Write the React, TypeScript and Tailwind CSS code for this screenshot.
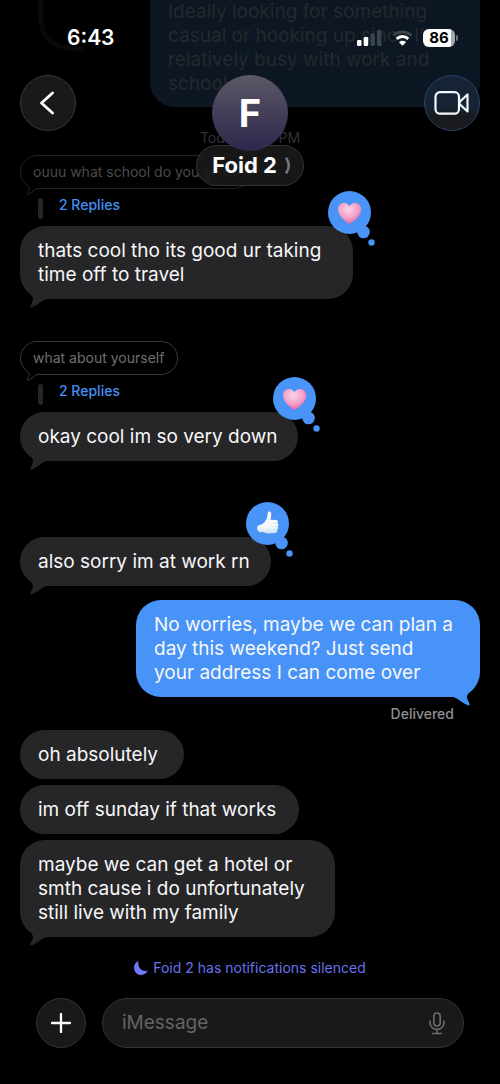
import clsx from "clsx";
import type { ReactNode } from "react";

type Reaction = "heart" | "thumb";

function Heart() {
  return (
    <>
      <defs>
        <radialGradient id="heart" cx="0.45" cy="0.3" r="0.8">
          <stop offset="0" stopColor="#fbd3e6" />
          <stop offset="0.5" stopColor="#f3a3cb" />
          <stop offset="1" stopColor="#ea4f93" />
        </radialGradient>
      </defs>
      <path
        d="M21.5 33C18 30.5 10 25.5 10 18.5C10 14.5 12.8 12 16 12C18.5 12 20.6 13.3 21.5 15.2C22.4 13.3 24.5 12 27 12C30.2 12 33.2 14.5 33.2 18.5C33.2 25.5 25 30.5 21.5 33Z"
        fill="url(#heart)"
      />
    </>
  );
}

function Thumb() {
  return (
    <>
      <defs>
        <linearGradient id="thumb" x1="0" y1="0" x2="0" y2="1">
          <stop offset="0" stopColor="#ffffff" />
          <stop offset="0.7" stopColor="#f4f8fc" />
          <stop offset="1" stopColor="#c9dff2" />
        </linearGradient>
      </defs>
      <path
        d="M22 10.2C22.3 9.3 24.2 9.2 24.9 10.5C25.7 12.5 25 15.3 24.3 17.8L30 18C32 18.1 32.5 20.2 31.4 21.2C32.8 21.9 32.7 24 31.5 24.6C32.5 25.4 32.2 27.3 31 27.8C31.8 29 30.9 30.8 29.3 31L22.5 31.4C19.5 31.5 17.5 29.6 16.3 30C13.8 31 11.8 29.5 11.3 27.3C10.8 25 11.5 23.6 13.8 23C17.5 22 20 19 21 15.5C21.5 13.8 21.5 11.8 22 10.2Z"
        fill="url(#thumb)"
      />
      <path d="M27 21.3H31M27 24.6H31.2M26.8 27.8H30.6" stroke="#cfe0f0" strokeWidth="0.7" strokeLinecap="round" />
    </>
  );
}

function ReactionBadge({ kind }: { kind: Reaction }) {
  return (
    <svg
      width="47"
      height="56"
      viewBox="0 0 47 56"
      className="absolute -top-[35px] -right-[22px]"
      role="img"
      aria-label={kind === "heart" ? "Loved" : "Liked"}
    >
      <circle cx="21.5" cy="21.5" r="21.5" fill="#4a94f8" />
      <circle cx="35.5" cy="41" r="6.3" fill="#4a94f8" />
      <circle cx="43.5" cy="51.5" r="3.2" fill="#4a94f8" />
      {kind === "heart" ? <Heart /> : <Thumb />}
    </svg>
  );
}

function Bubble({
  sent = false,
  tail = false,
  reaction,
  className,
  children,
}: {
  sent?: boolean;
  tail?: boolean;
  reaction?: Reaction;
  className?: string;
  children: ReactNode;
}) {
  return (
    <div
      className={clsx(
        "relative max-w-full rounded-[25px] pt-[13px] pb-3 pl-[18px]",
        sent ? "self-end bg-[#4893f8]" : "self-start bg-[#262628]",
        className,
      )}
    >
      <p className="text-[19px] leading-6 whitespace-pre-line text-[#f7f7f8]">{children}</p>
      {tail && (
        <svg
          width="28"
          height="20"
          viewBox="0 0 28 20"
          className={clsx(
            "absolute -bottom-[9px]",
            sent ? "right-0 -scale-x-100 text-[#4893f8]" : "left-0 text-[#262628]",
          )}
          aria-hidden="true"
        >
          <path d="M7 3.5C13 7.5 14.5 10.5 11.5 15.5C10 18 9.8 20 12 19.3C17 17.8 21 12.5 27 11V3Z" fill="currentColor" />
        </svg>
      )}
      {reaction && <ReactionBadge kind={reaction} />}
    </div>
  );
}

function Quote({ faded = false, children }: { faded?: boolean; children: ReactNode }) {
  return (
    <>
      <div
        className={clsx(
          "relative h-[34px] self-start rounded-full border pr-[13px] pl-3",
          faded ? "border-[#222222] text-[#4b4b4b]" : "border-[#38383a] text-[#707074]",
        )}
      >
        <p className="text-sm leading-8">{children}</p>
        <svg
          width="20"
          height="19"
          viewBox="0 0 20 19"
          className={clsx("absolute -bottom-2 -left-px", faded ? "text-[#2a2a2a]" : "text-[#38383a]")}
          aria-hidden="true"
        >
          <path
            d="M6.5 7.5C10 10.2 9.6 12 8 14.5C6.8 16.5 7 17.7 8.8 17C12 15.8 13.5 12.8 17.5 11.5"
            fill="black"
            stroke="currentColor"
          />
        </svg>
      </div>
      <div className="flex h-[37px] items-start gap-4 pl-[18px]">
        <span className="mt-[9px] h-[21px] w-[5px] rounded-full bg-[#262628]" />
        <a href="#replies" className="mt-1.5 text-sm leading-5 font-medium text-[#4490f5]">
          2 Replies
        </a>
      </div>
    </>
  );
}

function StatusBar() {
  return (
    <div className="flex h-[75px] items-center justify-between pr-[42px] pl-[67px]">
      <span className="text-[21px] leading-6 font-semibold text-white">6:43</span>
      <div className="flex items-center gap-2.5">
        <svg width="25" height="16" viewBox="0 0 25 16" aria-hidden="true">
          <rect x="0" y="10" width="4.5" height="6" rx="1.3" fill="white" />
          <rect x="6.7" y="7" width="4.5" height="9" rx="1.3" fill="white" />
          <rect x="13.4" y="3.5" width="4.5" height="12.5" rx="1.3" fill="#3a444f" />
          <rect x="20" y="0" width="4.5" height="16" rx="1.3" fill="#3a444f" />
        </svg>
        <svg width="21" height="16" viewBox="0 0 21 16" aria-hidden="true" fill="none">
          <path d="M1.5 5.5C6.6 0.7 14.4 0.7 19.5 5.5" stroke="#3a444f" strokeWidth="3" />
          <path d="M4.7 8.9C8 5.8 13 5.8 16.3 8.9" stroke="white" strokeWidth="3" />
          <path d="M10.5 15.7L7 12.2C9 10.4 12 10.4 14 12.2Z" fill="white" />
        </svg>
        <div className="flex items-center gap-px">
          <span className="h-[18px] w-8 rounded-md bg-linear-to-r from-white from-88% to-[#a5a9ae] to-88% text-center text-[15px] leading-[18px] font-bold text-black">
            86
          </span>
          <span className="h-1.5 w-0.5 rounded-r-full bg-[#6b737c]" />
        </div>
      </div>
    </div>
  );
}

function Header() {
  return (
    <header className="absolute inset-x-0 top-0 z-10">
      <StatusBar />
      <div className="flex items-start justify-between px-5">
        <button
          type="button"
          aria-label="Back"
          className="flex size-14 items-center justify-center rounded-full border border-[#3a3a3a] bg-[#191919]"
        >
          <svg width="16" height="24" viewBox="0 0 16 24" fill="none" stroke="white" strokeWidth="2.8" strokeLinecap="round" strokeLinejoin="round">
            <path d="M12.5 2L1.5 12L12.5 22" />
          </svg>
        </button>
        <div className="flex flex-col items-center">
          <div className="relative flex size-[76px] items-center justify-center rounded-full bg-linear-to-b from-[#5c5867] to-[#2f274b] text-[38px] font-bold text-white">
            F
          </div>
          <button
            type="button"
            className="-mt-1.5 flex h-[41px] items-center gap-2 rounded-full border border-[#333333] bg-[#191919]/90 pr-3 pl-[15px] text-[22px] font-bold text-white"
          >
            Foid 2
            <svg width="6" height="17" viewBox="0 0 6 17" fill="none" stroke="#77777a" strokeWidth="2.5" strokeLinecap="round" strokeLinejoin="round">
              <path d="M1.5 1.5Q6 8.5 1.5 15.5" />
            </svg>
          </button>
        </div>
        <button
          type="button"
          aria-label="Video call"
          className="flex size-14 items-center justify-center rounded-full border border-[#28456b] bg-linear-to-b from-[#152335] from-55% to-[#191b1e] to-75%"
        >
          <svg width="36" height="24" viewBox="0 0 36 24" fill="none" stroke="#f1f8ff" strokeWidth="2.2" strokeLinejoin="round">
            <rect x="1.5" y="1.2" width="23.5" height="21.5" rx="4.5" />
            <path d="M25.5 11L33.5 3.5V20.5L25.5 13Z" />
          </svg>
        </button>
      </div>
    </header>
  );
}

function Composer() {
  return (
    <form className="mt-[18px] flex gap-4 px-9 pb-9" onSubmit={(event) => event.preventDefault()}>
      <button
        type="button"
        aria-label="Add"
        className="flex size-[50px] shrink-0 items-center justify-center rounded-full border border-[#333333] bg-[#191919]"
      >
        <svg width="20" height="20" viewBox="0 0 20 20" stroke="white" strokeWidth="2.3" strokeLinecap="round">
          <path d="M10 1V19M1 10H19" />
        </svg>
      </button>
      <div className="flex h-[50px] min-w-0 flex-1 items-center rounded-full border border-[#333333] bg-[#191919] pr-[18px] pl-[19px]">
        <input
          type="text"
          aria-label="Message"
          placeholder="iMessage"
          className="min-w-0 flex-1 bg-transparent text-[19px] text-white outline-none placeholder:text-[#636366]"
        />
        <button type="button" aria-label="Dictate">
          <svg width="16" height="23" viewBox="0 0 16 23" fill="none" stroke="#6c6c6e" strokeWidth="1.6" strokeLinecap="round">
            <rect x="4.8" y="1" width="6.4" height="13" rx="3.2" />
            <path d="M1 9V10.5A7 7 0 0 0 15 10.5V9M8 17.5V21.5M3.5 21.5H12.5" />
          </svg>
        </button>
      </div>
    </form>
  );
}

export default function App() {
  return (
    <div className="relative flex min-h-screen flex-col overflow-hidden bg-black font-['Inter',sans-serif]">
      <Header />
      <main className="flex flex-1 flex-col px-5">
        {/* oldest message, scrolled under the header */}
        <div className="relative flex justify-end">
          <svg width="66" height="52" viewBox="0 0 66 52" fill="none" className="absolute top-0 left-0" aria-hidden="true">
            <path d="M20.5 0V16C20.5 38 32 49 62 49" stroke="#090909" strokeWidth="5" strokeLinecap="round" />
          </svg>
          <div className="w-[330px] rounded-b-[25px] bg-[#0c1723] pb-[11px] pl-[18px]">
            <p className="text-[19px] leading-6 whitespace-pre-line text-[#25282c]">
              {"Ideally looking for something\ncasual or hooking up since I'm\nrelatively busy with work and\nschool"}
            </p>
          </div>
        </div>
        <p className="pt-[22px] pb-2 text-center text-sm leading-[18px] text-[#333333]">Today 2:48 PM</p>

        <Quote faded>ouuu what school do you go to</Quote>
        <Bubble tail reaction="heart" className="w-[333px]">
          {"thats cool tho its good ur taking\ntime off to travel"}
        </Bubble>

        <div className="mt-[42px] flex flex-col">
          <Quote>what about yourself</Quote>
          <Bubble tail reaction="heart" className="w-[278px]">
            okay cool im so very down
          </Bubble>
        </div>

        <div className="mt-[76px] flex flex-col">
          <Bubble tail reaction="thumb" className="w-[251px]">
            also sorry im at work rn
          </Bubble>
        </div>

        <div className="mt-[14px] flex flex-col">
          <Bubble sent tail className="w-[344px]">
            {"No worries, maybe we can plan a\nday this weekend? Just send\nyour address I can come over"}
          </Bubble>
          <p className="mt-2 mr-[26px] self-end text-sm leading-[17px] font-medium text-[#8e8e93]">Delivered</p>
        </div>

        <div className="mt-2 flex flex-col gap-1.5">
          <Bubble className="w-[164px]">oh absolutely</Bubble>
          <Bubble className="w-[279px]">im off sunday if that works</Bubble>
          <Bubble tail className="w-[315px]">
            {"maybe we can get a hotel or\nsmth cause i do unfortunately\nstill live with my family"}
          </Bubble>
        </div>

        <p className="mt-5 flex items-center justify-center gap-[5px] text-sm leading-[22px] text-[#6a72ee]">
          <svg width="14" height="14" viewBox="0 0 14 14" fill="#7079fb" aria-hidden="true">
            <path d="M4.5 0C1.8 1 0 3.6 0 6.7C0 10.7 3.2 14 7.2 14C10.2 14 12.7 12.2 13.7 9.6C9 11 3.2 8 4.5 0Z" />
          </svg>
          Foid 2 has notifications silenced
        </p>
      </main>
      <Composer />
    </div>
  );
}
